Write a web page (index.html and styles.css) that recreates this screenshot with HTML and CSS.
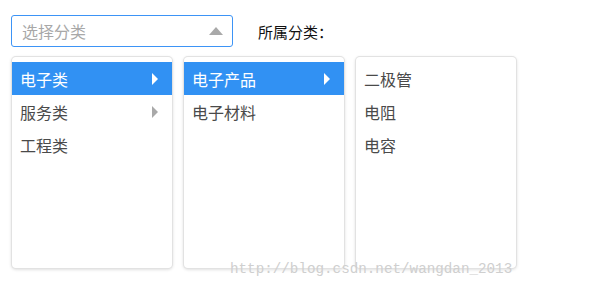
FILE: index.html
```html
<!DOCTYPE html>
<html>
<head>
<meta charset="utf-8">
<link rel="stylesheet" href="styles.css">
</head>
<body>
<div class="page">
  <div class="top">
    <div class="select">
      <span class="placeholder">选择分类</span>
      <span class="caret"></span>
    </div>
    <span class="label">所属分类：</span>
  </div>
  <div class="panels">
    <ul class="panel">
      <li class="item active">电子类<span class="arrow"></span></li>
      <li class="item">服务类<span class="arrow"></span></li>
      <li class="item">工程类</li>
    </ul>
    <ul class="panel">
      <li class="item active">电子产品<span class="arrow"></span></li>
      <li class="item">电子材料</li>
    </ul>
    <ul class="panel">
      <li class="item">二极管</li>
      <li class="item">电阻</li>
      <li class="item">电容</li>
    </ul>
  </div>
  <div class="watermark">http://blog.csdn.net/wangdan_2013</div>
</div>
</body>
</html>
```
FILE: styles.css
```css
html, body {
  margin: 0;
  padding: 0;
  background: #fff;
}
.page {
  position: relative;
  width: 611px;
  height: 290px;
  padding: 15px 0 0 11px;
  box-sizing: border-box;
  font-family: "Noto Sans CJK SC", "Noto Sans", sans-serif;
}
.top {
  display: flex;
  align-items: center;
  gap: 25px;
}
.select {
  width: 222px;
  height: 32px;
  box-sizing: border-box;
  border: 1px solid #3d94f6;
  border-radius: 3px;
  display: flex;
  align-items: center;
  justify-content: space-between;
  padding: 0 9px 0 10px;
}
.placeholder {
  color: #a8a8a8;
  font-size: 16px;
  line-height: 1;
}
.caret {
  width: 0;
  height: 0;
  border-left: 7.5px solid transparent;
  border-right: 7.5px solid transparent;
  border-bottom: 8px solid #a9a9a9;
  margin-bottom: 1px;
}
.label {
  font-size: 15px;
  color: #111;
  line-height: 1;
}
.panels {
  display: flex;
  gap: 12px;
  margin-top: 10px;
  margin-left: 1px;
}
.panel {
  list-style: none;
  margin: 0;
  padding: 5px 0 0;
  width: 160px;
  height: 211px;
  box-sizing: border-box;
  background: #fff;
  border-radius: 4px;
  box-shadow: 0 0 0 1px #e2e2e2, 0 1px 3px 1px rgba(0,0,0,0.12);
}
.item {
  height: 33px;
  display: flex;
  align-items: center;
  justify-content: space-between;
  padding: 0 14px 0 8px;
  font-size: 16px;
  color: #4a4a4a;
}
.item.active {
  background: #3191f3;
  color: #fff;
}
.arrow {
  width: 0;
  height: 0;
  border-top: 6px solid transparent;
  border-bottom: 6px solid transparent;
  border-left: 6px solid #a9a9a9;
}
.item.active .arrow {
  border-left-color: #fff;
}
.watermark {
  position: absolute;
  left: 230px;
  top: 261px;
  font-family: "Liberation Mono", monospace;
  font-size: 14.25px;
  color: #cfcfcf;
}
```
